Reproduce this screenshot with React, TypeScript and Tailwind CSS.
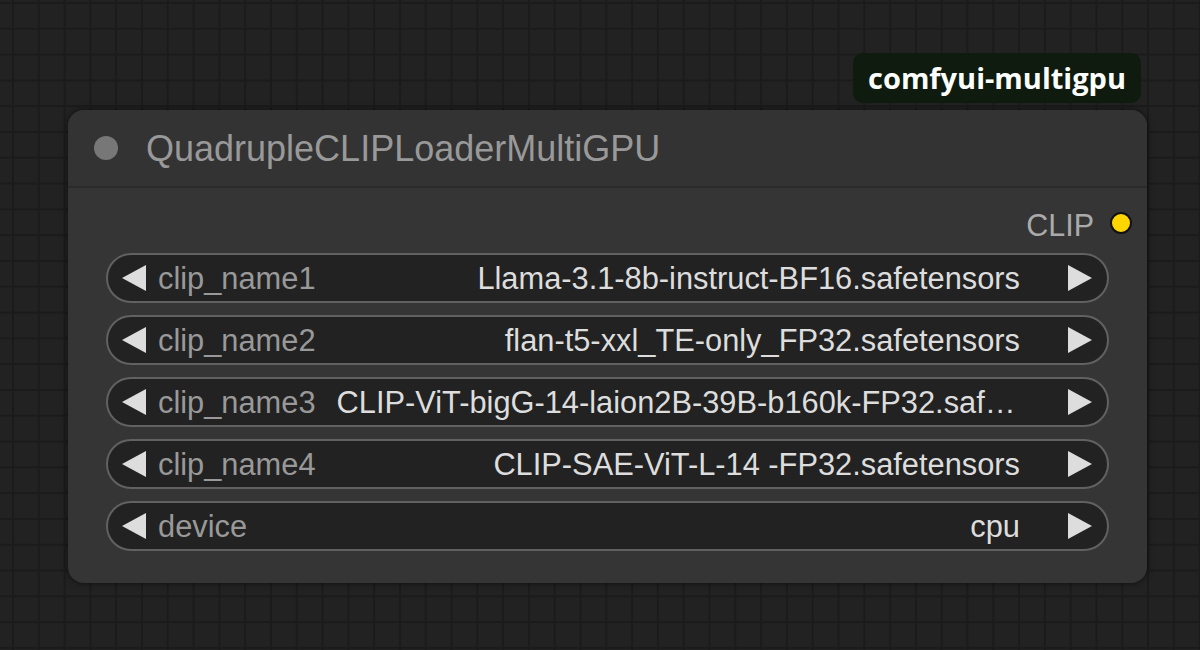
import React from 'react';

const widgets = [
  { label: 'clip_name1', value: 'Llama-3.1-8b-instruct-BF16.safetensors' },
  { label: 'clip_name2', value: 'flan-t5-xxl_TE-only_FP32.safetensors' },
  { label: 'clip_name3', value: 'CLIP-ViT-bigG-14-laion2B-39B-b160k-FP32.safetensors' },
  { label: 'clip_name4', value: 'CLIP-SAE-ViT-L-14 -FP32.safetensors' },
  { label: 'device', value: 'cpu' },
];

const Arrow: React.FC<{ dir: 'left' | 'right' }> = ({ dir }) => (
  <svg width="24" height="26" viewBox="0 0 24 26" className="shrink-0">
    {dir === 'left' ? (
      <path d="M24 0 L0 13 L24 26 Z" fill="#dddddd" />
    ) : (
      <path d="M0 0 L24 13 L0 26 Z" fill="#dddddd" />
    )}
  </svg>
);

const ComboWidget: React.FC<{ label: string; value: string }> = ({ label, value }) => (
  <div className="flex h-[50px] items-center rounded-full border-2 border-[#616161] bg-[#222222] pl-[14px] pr-[15px] text-[30.8px] leading-none">
    <Arrow dir="left" />
    <span className="ml-[12px] shrink-0 pt-[2px] text-[#999999]">{label}</span>
    <span className="ml-[21px] min-w-0 flex-1 truncate py-1 pt-[6px] text-right text-[#dddddd]">{value}</span>
    <span className="ml-[48px] flex">
      <Arrow dir="right" />
    </span>
  </div>
);

export default function App() {
  return (
    <div
      className="h-[650px] w-[1200px] overflow-hidden bg-[#222222] pl-[68px] pt-[53px] [background-image:linear-gradient(#1b1b1b_2px,transparent_2px),linear-gradient(90deg,#1b1b1b_2px,transparent_2px)] [background-position:12px_2px] [background-size:25.8px_25.8px]"
      style={{ fontFamily: '"Liberation Sans", Arial, sans-serif' }}
    >
      <div className="flex w-[1079px] flex-col">
        {/* node badge */}
        <div className="mr-[6px] flex h-[50px] w-[288px] items-center justify-center self-end rounded-[10px] bg-[#0e1b0e]">
          <span
            className="text-[29px] font-bold text-white"
            style={{ fontFamily: '"Open Sans", "Noto Sans", sans-serif' }}
          >
            comfyui-multigpu
          </span>
        </div>

        {/* node */}
        <div className="mt-[7px] flex h-[473px] flex-col overflow-hidden rounded-[16px] bg-[#353535] shadow-[0_0_6px_rgba(0,0,0,0.6)]">
          <div className="flex h-[78px] shrink-0 items-center border-b-2 border-[#2b2b2b] bg-[#333333] pl-[26px] pr-4">
            <div className="h-[24px] w-[24px] rounded-full bg-[#777777]" />
            <span className="ml-[28px] pt-[2px] text-[36px] leading-none text-[#999999]">QuadrupleCLIPLoaderMultiGPU</span>
          </div>

          <div className="flex flex-col px-[38px] pt-[15px]">
            <div className="-mr-[25px] flex h-[40px] items-center justify-end">
              <span className="pt-[4px] text-[30.5px] leading-none text-[#aaaaaa]">CLIP</span>
              <div className="ml-[16px] mr-[2px] h-[22px] w-[22px] rounded-full border-2 border-[#111111] bg-[#ffd500]" />
            </div>
            <div className="mt-[10px] flex flex-col gap-[12px]">
              {widgets.map((w) => (
                <ComboWidget key={w.label} label={w.label} value={w.value} />
              ))}
            </div>
          </div>
        </div>
      </div>
    </div>
  );
}
